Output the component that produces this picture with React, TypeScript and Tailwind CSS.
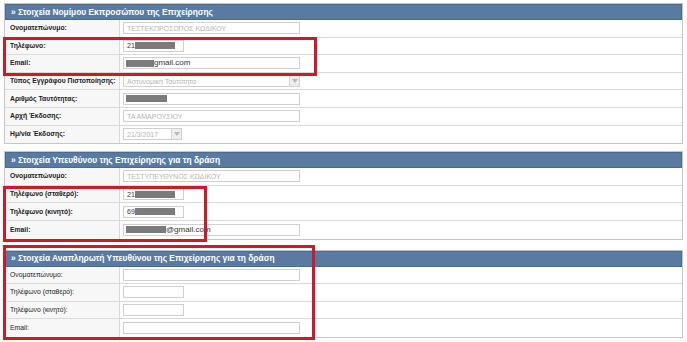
import React from "react";

type Field = {
  label: string;
  kind: "text" | "short" | "select" | "date";
  value?: string;
  redact?: [number, number];
  disabled?: boolean;
  suffix?: string;
};

const sections: { title: string; bold: boolean; fields: Field[] }[] = [
  {
    title: "» Στοιχεία Νομίμου Εκπροσώπου της Επιχείρησης",
    bold: true,
    fields: [
      { label: "Ονοματεπώνυμο:", kind: "text", value: "ΤΕΣΤΕΚΠΡΟΣΩΠΟΣ ΚΩΔΙΚΟΥ", disabled: true },
      { label: "Τηλέφωνο:", kind: "short", value: "21", redact: [6, 40] },
      { label: "Email:", kind: "text", redact: [2, 28], suffix: "gmail.com" },
      { label: "Τύπος Εγγράφου Πιστοποίησης:", kind: "select", value: "Αστυνομική Ταυτότητα", disabled: true },
      { label: "Αριθμός Ταυτότητας:", kind: "text", redact: [2, 41] },
      { label: "Αρχή Έκδοσης:", kind: "text", value: "ΤΑ ΑΜΑΡΟΥΣΙΟΥ", disabled: true },
      { label: "Ημ/νία Έκδοσης:", kind: "date", value: "21/3/2017", disabled: true },
    ],
  },
  {
    title: "» Στοιχεία Υπευθύνου της Επιχείρησης για τη δράση",
    bold: true,
    fields: [
      { label: "Ονοματεπώνυμο:", kind: "text", value: "ΤΕΣΤΥΠΕΥΘΥΝΟΣ ΚΩΔΙΚΟΥ", disabled: true },
      { label: "Τηλέφωνο (σταθερό):", kind: "short", value: "21", redact: [6, 40] },
      { label: "Τηλέφωνο (κινητό):", kind: "short", value: "69", redact: [6, 40] },
      { label: "Email:", kind: "text", redact: [2, 40], suffix: "@gmail.com" },
    ],
  },
  {
    title: "» Στοιχεία Αναπληρωτή Υπευθύνου της Επιχείρησης για τη δράση",
    bold: false,
    fields: [
      { label: "Ονοματεπώνυμο:", kind: "text" },
      { label: "Τηλέφωνο (σταθερό):", kind: "short" },
      { label: "Τηλέφωνο (κινητό):", kind: "short" },
      { label: "Email:", kind: "text" },
    ],
  },
];

function Arrow() {
  return (
    <span className="flex h-full w-[10px] items-center justify-center border-l border-[#d6d6d6] bg-[#eeeeee]">
      <svg width="6" height="4" viewBox="0 0 6 4">
        <path d="M0 0h6L3 4z" fill="#b8b8b8" />
      </svg>
    </span>
  );
}

function Input({ f }: { f: Field }) {
  const width = f.kind === "short" ? "w-[61px]" : f.kind === "date" ? "w-[59px]" : "w-[177px]";
  const color = f.disabled ? "text-[#b4b4b4]" : "text-[#333]";
  return (
    <div
      className={`relative flex h-[12px] ${width} items-center border border-[#cfcfcf] bg-white ${color} text-[7px] leading-none`}
    >
      <span className="flex flex-1 items-center overflow-hidden whitespace-nowrap pl-[3px]">
        {f.value && <span>{f.value}</span>}
        {f.redact && (
          <span
            className="inline-block h-[7px] bg-[#7b7b7b]"
            style={{ width: f.redact[1], marginLeft: f.value ? 0 : f.redact[0] - 3 }}
          />
        )}
        {f.suffix && <span className="text-[8px]">{f.suffix}</span>}
      </span>
      {(f.kind === "select" || f.kind === "date") && <Arrow />}
    </div>
  );
}

function Section({ s, mt }: { s: (typeof sections)[number]; mt: string }) {
  return (
    <div className={`${mt} border border-[#c6c6c6] bg-white`}>
      <div className="flex h-[16px] items-center border border-[#4b6a8f] bg-[#5a7ba1] pl-[5px] text-[8.4px] font-bold text-white">
        {s.title}
      </div>
      {s.fields.map((f, i) => (
        <div key={i} className="flex h-[17.6px] border-b border-[#d9d9d9] last:border-b-0">
          <div
            className={`flex w-[115px] items-center border-r border-[#d9d9d9] bg-[#f7f7f7] pl-[5px] text-[6.8px] text-[#222] ${
              s.bold ? "font-bold" : ""
            }`}
          >
            {f.label}
          </div>
          <div className="flex flex-1 items-center pl-[3px]">
            <Input f={f} />
          </div>
        </div>
      ))}
    </div>
  );
}

export default function App() {
  return (
    <div
      className="relative h-[342px] w-[687px] overflow-hidden bg-white px-[4px] pt-[3px]"
      style={{ fontFamily: '"Liberation Sans", Arial, sans-serif' }}
    >
      <Section s={sections[0]} mt="mt-0" />
      <Section s={sections[1]} mt="mt-[7px]" />
      <Section s={sections[2]} mt="mt-[10px]" />

      <div className="absolute left-[3px] top-[37px] h-[39px] w-[314px] border-[3px] border-[#cc1a2b]" />
      <div className="absolute left-[3px] top-[186px] h-[56px] w-[204px] border-[3px] border-[#cc1a2b]" />
      <div className="absolute left-[3px] top-[245px] h-[95px] w-[312px] border-[3px] border-[#cc1a2b]" />
    </div>
  );
}
